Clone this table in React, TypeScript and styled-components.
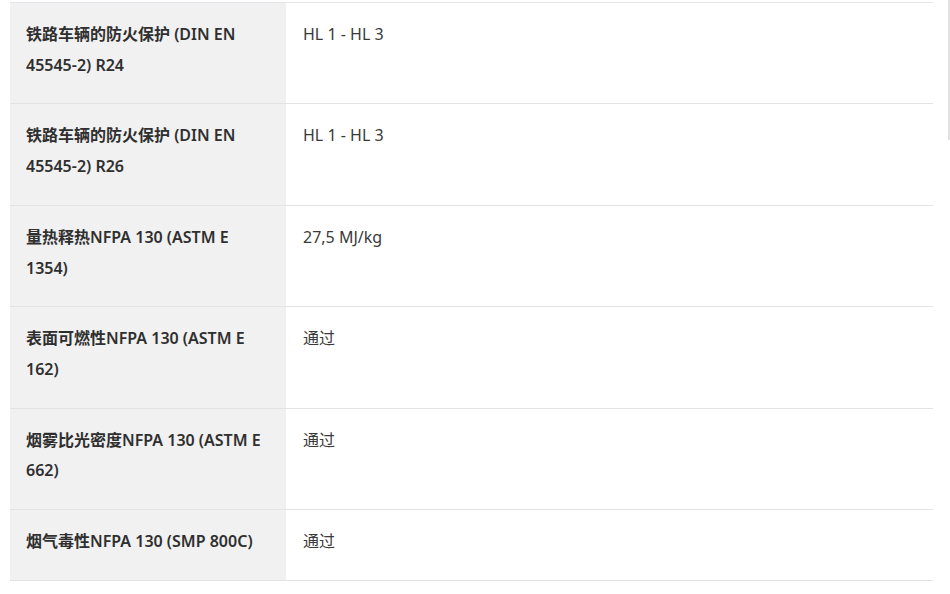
import styled, { createGlobalStyle } from 'styled-components'

const rows = [
  { label: '铁路车辆的防火保护 (DIN EN 45545-2) R24', value: 'HL 1 - HL 3' },
  { label: '铁路车辆的防火保护 (DIN EN 45545-2) R26', value: 'HL 1 - HL 3' },
  { label: '量热释热NFPA 130 (ASTM E 1354)', value: '27,5 MJ/kg' },
  { label: '表面可燃性NFPA 130 (ASTM E 162)', value: '通过' },
  { label: '烟雾比光密度NFPA 130 (ASTM E 662)', value: '通过' },
  { label: '烟气毒性NFPA 130 (SMP 800C)', value: '通过' },
]

export default function App() {
  return (
    <>
      <GlobalStyle />
      <Page>
        <SpecTable>
          <tbody>
            {rows.map((row, i) => (
              <Row key={i}>
                <LabelCell>{row.label}</LabelCell>
                <ValueCell>{row.value}</ValueCell>
              </Row>
            ))}
          </tbody>
        </SpecTable>
        <ScrollThumb />
      </Page>
    </>
  )
}

const GlobalStyle = createGlobalStyle`
  body {
    margin: 0;
    background: #fff;
    font-family: 'Noto Sans', 'Noto Sans CJK SC', sans-serif;
  }
`

const Page = styled.div`
  position: relative;
  width: 950px;
  height: 594px;
  overflow: hidden;
  padding: 2px 17px 0 10px;
  box-sizing: border-box;
`

const SpecTable = styled.table`
  width: 923px;
  border-collapse: collapse;
  border-top: 1px solid #e4e3ec;
`

const Row = styled.tr`
  border-bottom: 1px solid #e3e3e3;
`

const Cell = styled.td`
  padding: 16px 16px 23px;
  font-size: 16px;
  line-height: 30.7px;
  vertical-align: top;
  color: #2f2f2f;
`

const LabelCell = styled(Cell)`
  width: 244px;
  background: #f1f1f1;
  font-weight: 600;
`

const ValueCell = styled(Cell)`
  padding-left: 17px;
  font-weight: 400;
  color: #3a3a3a;
`

const ScrollThumb = styled.div`
  position: absolute;
  right: 0;
  top: 0;
  width: 2px;
  height: 140px;
  background: #e2e2e2;
`
